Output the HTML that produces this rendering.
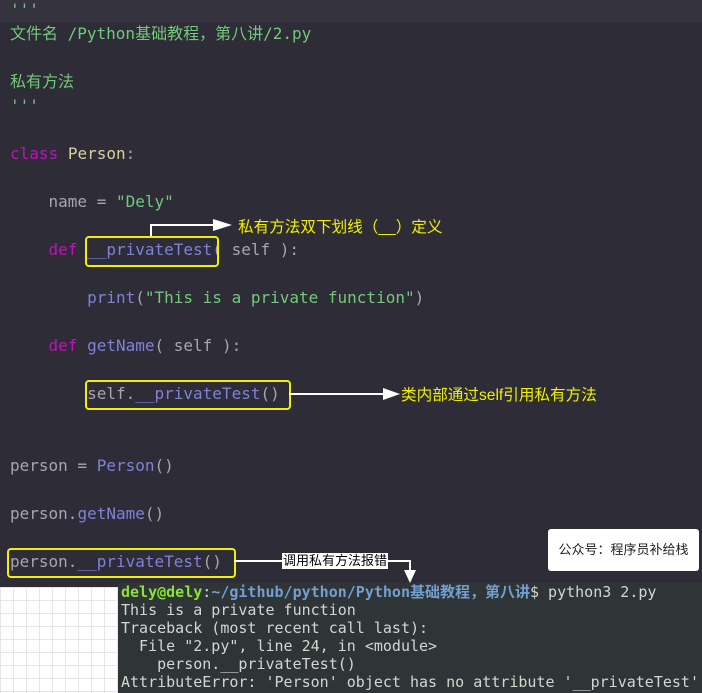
<!DOCTYPE html>
<html><head><meta charset="utf-8"><style>
body{margin:0;width:702px;height:693px;background:#2e2d37;position:relative;overflow:hidden;font-family:"DejaVu Sans Mono","Liberation Mono","Noto Sans CJK SC",monospace;}
.l{position:absolute;left:10px;font-size:16px;line-height:20px;white-space:pre;color:#a6a6b0;}
.g{color:#72c97a}.k{color:#c010c0}.c{color:#d3d39c}.f{color:#8080d8}
.box{position:absolute;border:2px solid #f0f000;border-radius:4px;}
.note{position:absolute;color:#f0f000;font-family:"Liberation Sans","Noto Sans CJK SC",sans-serif;font-size:15.6px;white-space:pre;}
.t{position:absolute;left:121px;font-size:15px;line-height:18px;white-space:pre;color:#d3d7cf;}
</style></head><body>
<div style="position:absolute;left:0;top:0;width:702px;height:22px;background:#35343e"></div>
<div class="l g" style="top:0px">'''</div>
<div class="l g" style="top:24px">文件名 /Python基础教程，第八讲/2.py</div>
<div class="l g" style="top:72px">私有方法</div>
<div class="l g" style="top:96px">'''</div>
<div class="l" style="top:144px"><span class="k">class</span> <span class="c">Person</span>:</div>
<div class="l" style="top:192px">    name = <span class="g">"Dely"</span></div>
<div class="l" style="top:240px">    <span class="k">def</span> <span class="f">__privateTest</span>( self ):</div>
<div class="l" style="top:288px">        <span class="f">print</span>(<span class="g">"This is a private function"</span>)</div>
<div class="l" style="top:336px">    <span class="k">def</span> <span class="f">getName</span>( self ):</div>
<div class="l" style="top:384px">        self.<span class="f">__privateTest</span>()</div>
<div class="l" style="top:456px">person = <span class="f">Person</span>()</div>
<div class="l" style="top:504px">person.<span class="f">getName</span>()</div>
<div class="l" style="top:552px">person.<span class="f">__privateTest</span>()</div>

<div class="box" style="left:85px;top:236px;width:130px;height:27px"></div>
<div class="box" style="left:85px;top:380px;width:202px;height:26px"></div>
<div class="box" style="left:7px;top:548px;width:225px;height:26px"></div>

<svg style="position:absolute;left:0;top:0" width="702" height="693">
<g stroke="#fff" stroke-width="2" fill="none">
<polyline points="151,236 151,225 215,225"/>
<line x1="289" y1="394" x2="385" y2="394"/>
<polyline points="234,561 410,561 410,572"/>
</g>
<g fill="#fff">
<polygon points="213,219 232,225 213,231"/>
<polygon points="383,388 400,394 383,400"/>
<polygon points="404,570 416,570 410,583"/>
</g>
</svg>
<div class="note" style="left:238px;top:215px">私有方法双下划线（__）定义</div>
<div class="note" style="left:401px;top:383px">类内部通过self引用私有方法</div>
<div style="position:absolute;left:282px;top:553px;background:#fff;color:#000;font-family:'Liberation Sans','Noto Sans CJK SC',sans-serif;font-size:13px;line-height:16px;padding:0 1px">调用私有方法报错</div>
<div style="position:absolute;left:548px;top:529px;width:151px;height:42px;background:#fff;border-radius:3px;font-family:'Liberation Sans','Noto Sans CJK SC',sans-serif;font-size:13px;line-height:42px;text-align:center;color:#222">公众号：程序员补给栈</div>

<div style="position:absolute;left:0;top:587px;width:118px;height:106px;background-color:#fff;background-image:linear-gradient(#e6e6e6 1px,transparent 1px),linear-gradient(90deg,#e6e6e6 1px,transparent 1px);background-size:13px 13px"></div>
<div style="position:absolute;left:118px;top:583px;width:584px;height:110px;background:#2f3436"></div>
<div class="t" style="top:583px"><b style="color:#8ae234">dely@dely</b>:<b style="color:#729fcf">~/github/python/Python基础教程，第八讲</b>$ python3 2.py</div>
<div class="t" style="top:601px">This is a private function</div>
<div class="t" style="top:619px">Traceback (most recent call last):</div>
<div class="t" style="top:637px">  File "2.py", line 24, in &lt;module&gt;</div>
<div class="t" style="top:655px">    person.__privateTest()</div>
<div class="t" style="top:673px">AttributeError: 'Person' object has no attribute '__privateTest'</div>
</body></html>
